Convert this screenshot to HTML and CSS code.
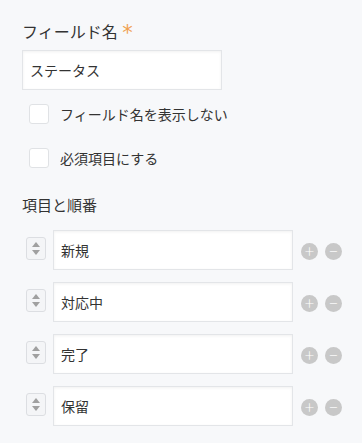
FILE: index.html
```html
<!DOCTYPE html>
<html lang="ja">
<head>
  <meta charset="UTF-8">
  <meta name="viewport" content="width=device-width, initial-scale=1.0">
  <title>フィールド設定</title>
  <link rel="stylesheet" href="styles.css">
</head>
<body>

<div class="panel">
  <label class="field-title" for="fieldName">フィールド名 <span class="required">*</span></label>
  <input type="text" id="fieldName" class="text-input name-input" value="ステータス">

  <label class="check-row">
    <span class="check-box"></span>
    <span>フィールド名を表示しない</span>
  </label>
  <label class="check-row second">
    <span class="check-box"></span>
    <span>必須項目にする</span>
  </label>

  <h3 class="section-title">項目と順番</h3>

  <div class="options">
    <div class="option-row">
      <span class="handle"><i class="up"></i><i class="down"></i></span>
      <input type="text" class="text-input option-input" value="新規">
      <span class="round-btn">+</span>
      <span class="round-btn">&minus;</span>
    </div>
    <div class="option-row">
      <span class="handle"><i class="up"></i><i class="down"></i></span>
      <input type="text" class="text-input option-input" value="対応中">
      <span class="round-btn">+</span>
      <span class="round-btn">&minus;</span>
    </div>
    <div class="option-row">
      <span class="handle"><i class="up"></i><i class="down"></i></span>
      <input type="text" class="text-input option-input" value="完了">
      <span class="round-btn">+</span>
      <span class="round-btn">&minus;</span>
    </div>
    <div class="option-row">
      <span class="handle"><i class="up"></i><i class="down"></i></span>
      <input type="text" class="text-input option-input" value="保留">
      <span class="round-btn">+</span>
      <span class="round-btn">&minus;</span>
    </div>
  </div>
</div>

</body>
</html>
```

FILE: styles.css
```css
body {
  margin: 0;
  padding: 0;
  background-color: #f7f8fa;
  color: #333;
  font-family: "Noto Sans CJK JP", "Noto Sans", sans-serif;
}

.panel {
  padding: 19px 22px 0 22px;
  display: flex;
  flex-direction: column;
  align-items: flex-start;
}

.field-title {
  font-size: 16px;
  line-height: 24px;
  height: 24px;
  color: #333;
}

.required {
  color: #f0a050;
  margin-left: 1px;
  font-family: "DejaVu Sans", sans-serif;
  font-size: 21px;
  line-height: 16px;
  vertical-align: -2px;
}

.text-input {
  box-sizing: border-box;
  height: 40px;
  border: 1px solid #e3e5e8;
  background-color: #fff;
  box-shadow: inset 0 1px 3px rgba(0, 0, 0, 0.06);
  font-family: "Noto Sans CJK JP", "Noto Sans", sans-serif;
  font-size: 14px;
  color: #333;
  padding: 0 7px;
  margin: 0;
  outline: none;
}

.name-input {
  width: 200px;
  margin-top: 7px;
}

.check-row {
  display: flex;
  align-items: center;
  height: 24px;
  margin-top: 12px;
  margin-left: 7px;
  font-size: 14px;
  color: #333;
}

.check-row.second {
  margin-top: 20px;
}

.check-box {
  box-sizing: border-box;
  width: 20px;
  height: 20px;
  border: 1px solid #e0e2e5;
  border-radius: 3px;
  background-color: #fff;
  margin-right: 11px;
}

.section-title {
  margin: 24px 0 0 0;
  font-size: 15px;
  font-weight: normal;
  line-height: 22px;
}

.options {
  margin-top: 14px;
  margin-left: 4px;
  display: flex;
  flex-direction: column;
  gap: 12px;
}

.option-row {
  display: flex;
  align-items: center;
}

.handle {
  box-sizing: border-box;
  width: 20px;
  height: 23px;
  border: 1px solid #dcdee2;
  border-radius: 3px;
  background-color: #f4f5f7;
  margin-top: -4px;
  margin-right: 7px;
  display: flex;
  flex-direction: column;
  align-items: center;
  justify-content: center;
  gap: 3px;
}

.handle i {
  width: 0;
  height: 0;
  border-left: 4px solid transparent;
  border-right: 4px solid transparent;
}

.handle .up {
  border-bottom: 5px solid #a0a0a0;
}

.handle .down {
  border-top: 5px solid #a0a0a0;
}

.option-input {
  width: 240px;
  margin-right: 8px;
}

.round-btn {
  width: 17px;
  height: 17px;
  border-radius: 50%;
  background-color: #c8c8c8;
  color: #fff;
  font-family: "Lato", "DejaVu Sans", sans-serif;
  font-weight: 300;
  font-size: 17px;
  line-height: 16px;
  text-align: center;
  margin-top: 3px;
  margin-right: 7px;
}
```
